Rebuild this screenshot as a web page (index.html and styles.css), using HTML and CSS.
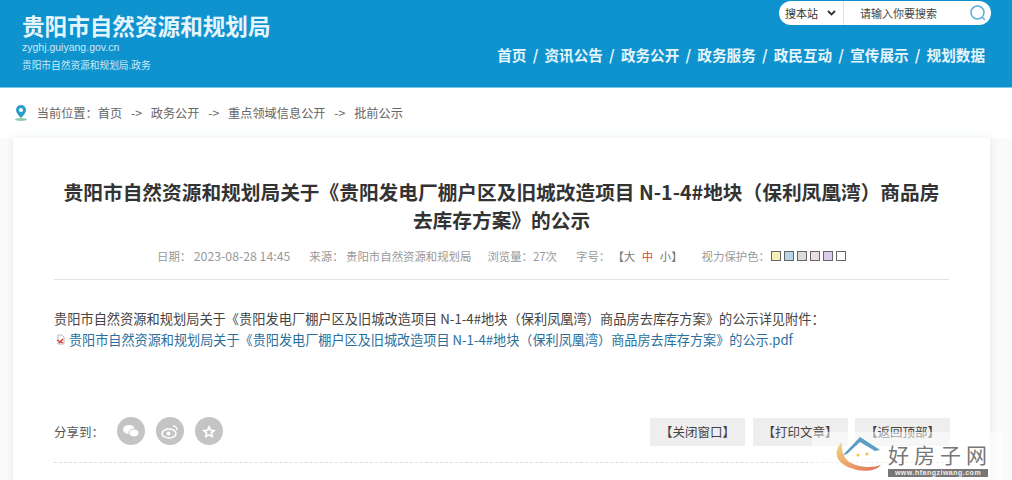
FILE: index.html
```html
<!DOCTYPE html>
<html lang="zh-CN">
<head>
  <meta charset="UTF-8" />
  <title>贵阳市自然资源和规划局</title>
  <link rel="stylesheet" href="styles.css">
</head>
<body>
  <header class="top">
    <div class="brand">
      <h2>贵阳市自然资源和规划局</h2>
      <div class="domain">zyghj.guiyang.gov.cn</div>
      <div class="tag">贵阳市自然资源和规划局.政务</div>
    </div>
    <div class="top-right">
      <div class="search">
        <span class="search-type">搜本站
          <svg width="9" height="6" viewBox="0 0 9 6"><path d="M1 1l3.500 3.500L8 1" fill="none" stroke="#333" stroke-width="1.800"/></svg>
        </span>
        <span class="search-input">请输入你要搜索</span>
        <svg class="search-icon" width="18" height="18" viewBox="0 0 18 18"><circle cx="8.500" cy="8.500" r="6.500" fill="none" stroke="#5fb0d3" stroke-width="1.500"/><path d="M13 13l3 3" stroke="#5fb0d3" stroke-width="1.500"/></svg>
      </div>
      <nav class="nav">
        <a>首页</a><i>/</i><a>资讯公告</a><i>/</i><a>政务公开</a><i>/</i><a>政务服务</a><i>/</i><a>政民互动</a><i>/</i><a>宣传展示</a><i>/</i><a>规划数据</a>
      </nav>
    </div>
  </header>

  <div class="crumbs">
    <svg width="14" height="18" viewBox="0 0 14 18"><path d="M7 1a5 5 0 0 0-5 5c0 3.500 5 8 5 8s5-4.500 5-8a5 5 0 0 0-5-5z" fill="#2b9bc9"/><circle cx="7" cy="6" r="2" fill="#fff"/><ellipse cx="7" cy="15.500" rx="6" ry="1.500" fill="#8cc9a8"/></svg>
    <span>当前位置：首页</span><span>-&gt;</span><span>政务公开</span><span>-&gt;</span><span>重点领域信息公开</span><span>-&gt;</span><span>批前公示</span>
  </div>

  <main class="card">
    <h1>贵阳市自然资源和规划局关于《贵阳发电厂棚户区及旧城改造项目 N-1-4#地块（保利凤凰湾）商品房去库存方案》的公示</h1>
    <div class="meta">
      <span>日期： <span class="meta-date">2023-08-28 14:45</span></span>
      <span class="meta-source">来源： 贵阳市自然资源和规划局</span>
      <span>浏览量：27次</span>
      <span class="meta-size">字号：<b>【大</b> <em>中</em> <b>小】</b></span>
      <span class="colors">视力保护色：
        <i class="c1"></i><i class="c2"></i><i class="c3"></i><i class="c4"></i><i class="c5"></i><i class="c6"></i>
      </span>
    </div>
    <div class="content">
      <p>贵阳市自然资源和规划局关于《贵阳发电厂棚户区及旧城改造项目 N-1-4#地块（保利凤凰湾）商品房去库存方案》的公示详见附件：</p>
      <p class="file">
        <svg width="10" height="11" viewBox="0 0 10 11"><path d="M2 1h4l2 2v7H2z" fill="#fff" stroke="#bbb"/><path d="M1 6l6 3M7 5L3 9" stroke="#d9362b" stroke-width="1.300"/></svg>
        <a>贵阳市自然资源和规划局关于《贵阳发电厂棚户区及旧城改造项目 N-1-4#地块（保利凤凰湾）商品房去库存方案》的公示.pdf</a>
      </p>
    </div>
    <div class="foot">
      <div class="share">
        <span>分享到：</span>
        <i class="round"><svg width="18" height="14" viewBox="0 0 18 14"><ellipse cx="7" cy="5.500" rx="6" ry="4.500" fill="#fff"/><ellipse cx="12" cy="9" rx="5" ry="4" fill="#fff" stroke="#c4c4c4"/></svg></i>
        <i class="round"><svg width="18" height="15" viewBox="0 0 18 15"><ellipse cx="8" cy="9.500" rx="7" ry="4.500" fill="none" stroke="#fff" stroke-width="1.600"/><circle cx="7.500" cy="9.500" r="2" fill="#fff"/><path d="M12 2a4 4 0 0 1 4 4" fill="none" stroke="#fff" stroke-width="1.500"/></svg></i>
        <i class="round"><svg width="16" height="15" viewBox="0 0 16 15"><path d="M8 1l2.100 4.400 4.900.6-3.600 3.300.9 4.700L8 11.700 3.700 14l.9-4.700L1 6l4.900-.6zM8 5L7 7l-2 .3 1.500 1.400L6.200 11 8 10l1.800 1-.3-2.300L11 7.300 9 7z" fill="#fff" fill-rule="evenodd"/></svg></i>
      </div>
      <div class="btns">
        <a>【关闭窗口】</a><a>【打印文章】</a><a>【返回顶部】</a>
      </div>
    </div>
  </main>

  <div class="mark">
    <svg width="46" height="44" viewBox="0 0 46 44">
      <defs>
        <linearGradient id="swoosh" x1="0" y1="0" x2="1" y2="1">
          <stop offset="0" stop-color="#f3d97a"/>
          <stop offset="1" stop-color="#e0705a"/>
        </linearGradient>
      </defs>
      <path d="M7 10C-3 20 0 33 22 38c10 2 20 0 24-5-8 3-22 3-32-3C8 25 6 18 7 10z" fill="url(#swoosh)"/>
      <path d="M8 23L25 5l20 13-5 1L25 10 12 22z" fill="#5b9ec4"/>
      <circle cx="23" cy="23" r="1.500" fill="#f0c040"/><circle cx="32" cy="22" r="1.500" fill="#f0c040"/>
    </svg>
    <div class="mark-text">
      <div class="mark-name">好房子网</div>
      <div class="mark-url">www.hfangziwang.com</div>
    </div>
  </div>
</body>
</html>
```

FILE: styles.css
```css
* {
  margin: 0;
  padding: 0;
  box-sizing: border-box;
}

body {
  height: 480px;
  overflow: hidden;
  background: #fafafa;
  color: #333;
  font-family: "Noto Sans CJK SC", "Liberation Sans", sans-serif;
  position: relative;
}

i, em {
  font-style: normal;
}

.top {
  height: 88px;
  background: #0f93cf;
  border-bottom: 1px solid #7cc6e6;
  display: flex;
  justify-content: space-between;
  padding: 0 27px 0 22px;
  color: #fff;
}

.brand {
  padding-top: 11px;
}

.brand h2 {
  font-size: 22.600px;
  line-height: 30px;
  font-weight: 700;
  color: #e6f5fb;
}

.domain {
  font: 10.500px/12px "Liberation Sans", sans-serif;
  color: #cde9f5;
}

.tag {
  font-size: 9.700px;
  line-height: 14px;
  margin-top: 5px;
  color: #cde9f5;
}

.top-right {
  display: flex;
  flex-direction: column;
  align-items: flex-end;
}

.search {
  width: 212px;
  height: 24px;
  margin: 1px -6px 0 0;
  background: #fff;
  border-radius: 12px;
  display: flex;
  align-items: center;
  color: #333;
  font-size: 11px;
}

.search-type {
  width: 65px;
  height: 100%;
  padding-left: 6px;
  border-right: 1px solid #d6e6ee;
  display: flex;
  align-items: center;
  gap: 9px;
}

.search-input {
  margin-left: 16px;
  color: #444;
}

.search-icon {
  margin-left: auto;
  margin-right: 4px;
}

.nav {
  margin-top: 19px;
  display: flex;
  gap: 6.200px;
  font-size: 14.600px;
  line-height: 22px;
  font-weight: 700;
  color: #e6f5fb;
}

.crumbs {
  height: 50px;
  padding-left: 14px;
  background: #fff;
  display: flex;
  align-items: center;
  gap: 8.800px;
  font-size: 12.200px;
  color: #666;
}

.card {
  margin: 0 22px 0 13px;
  height: 360px;
  padding: 0 41px;
  background: #fff;
  box-shadow: 0 0 8px rgba(170, 190, 205, 0.3);
}

.card h1 {
  padding: 40px 8px 0;
  font-size: 19.700px;
  line-height: 28px;
  font-weight: 700;
  text-align: center;
  color: #333;
}

.meta {
  margin-top: 12px;
  height: 34px;
  border-bottom: 1px solid #e2e2e2;
  padding: 1px 0 0 103px;
  display: flex;
  align-items: flex-start;
  gap: 19px;
  font-size: 11.400px;
  line-height: 18px;
  color: #999;
}

.meta-date {
  font-size: 12.300px;
}

.meta-source {
  margin-right: -3px;
}

.meta-size b:first-of-type {
  margin-left: 8px;
}

.meta b {
  font-weight: 400;
  color: #777;
}

.meta em {
  color: #d9463a;
  margin: 0 4px;
}

.colors {
  display: flex;
  align-items: center;
  gap: 3px;
}

.colors .c1 {
  margin-left: -2px;
}

.colors i {
  width: 10px;
  height: 10px;
  border: 1px solid #666;
}

.c1 { background: #f2f0b4; }
.c2 { background: #b4d6e8; }
.c3 { background: #dcdcdc; }
.c4 { background: #ecdde2; }
.c5 { background: #dcccea; }
.c6 { background: #fff; }

.content {
  padding-top: 28px;
  font-size: 13.220px;
  line-height: 21px;
  color: #444;
  white-space: nowrap;
}

.file {
  display: flex;
  align-items: center;
  gap: 3px;
  padding-left: 2px;
}

.file a {
  font-size: 13.130px;
  color: #2a6f9e;
}

.foot {
  margin-top: 67px;
  height: 46px;
  border-bottom: 1px dashed #ddd;
  display: flex;
  justify-content: space-between;
  align-items: flex-start;
}

.share {
  display: flex;
  align-items: center;
  gap: 11px;
  font-size: 12.500px;
  color: #555;
}

.share span {
  margin-right: 2px;
}

.round {
  width: 28px;
  height: 28px;
  border-radius: 50%;
  background: #c4c4c4;
  display: flex;
  align-items: center;
  justify-content: center;
}

.btns {
  display: flex;
  gap: 7.500px;
  padding-top: 1px;
  margin-right: -1px;
}

.btns a {
  width: 95px;
  height: 28px;
  background: #eee;
  font-size: 12.500px;
  line-height: 16px;
  padding-top: 6px;
  text-align: center;
  color: #444;
}

.mark {
  position: absolute;
  left: 812px;
  top: 432px;
  width: 190px;
  height: 48px;
  padding-left: 23px;
  background: rgba(255, 255, 255, 0.5);
  display: flex;
  gap: 7px;
  align-items: flex-start;
}

.mark-text {
  padding-top: 9px;
}

.mark-name {
  font-size: 21px;
  line-height: 26px;
  letter-spacing: 5px;
  color: #777;
  white-space: nowrap;
}

.mark-url {
  width: 100px;
  height: 8px;
  margin-top: 2px;
  background: #777;
  color: #eee;
  font: 700 7px/8px "Liberation Sans", sans-serif;
  letter-spacing: 0.500px;
  text-align: center;
  white-space: nowrap;
  overflow: hidden;
}
```
